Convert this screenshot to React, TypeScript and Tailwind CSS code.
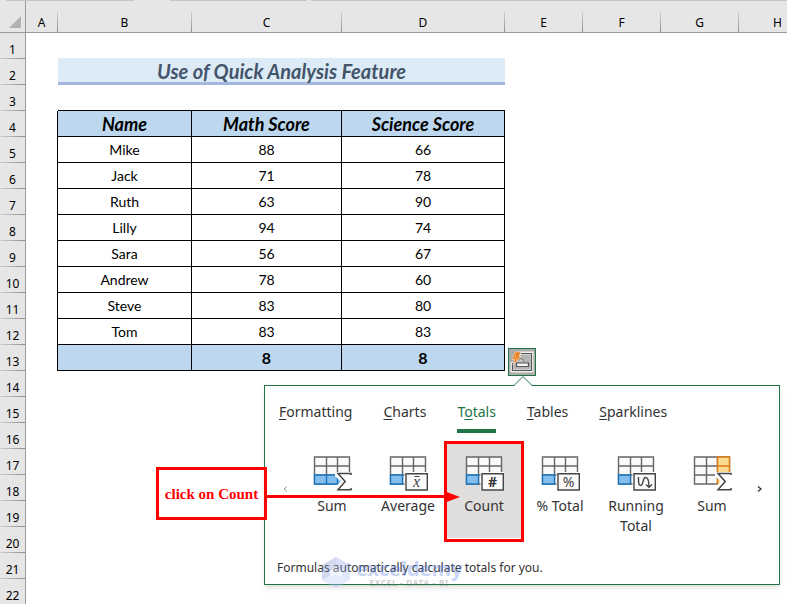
import React, { useState } from 'react';
import { clsx } from 'clsx';

interface Score {
  name: string;
  math: number;
  science: number;
}

type Badge = 'sigma' | 'mean' | 'hash' | 'percent' | 'running';

interface TotalOption {
  id: string;
  label: string;
  badge: Badge;
  column?: boolean;
}

const scores: Score[] = [
  { name: 'Mike', math: 88, science: 66 },
  { name: 'Jack', math: 71, science: 78 },
  { name: 'Ruth', math: 63, science: 90 },
  { name: 'Lilly', math: 94, science: 74 },
  { name: 'Sara', math: 56, science: 67 },
  { name: 'Andrew', math: 78, science: 60 },
  { name: 'Steve', math: 83, science: 80 },
  { name: 'Tom', math: 83, science: 83 },
];

const columns = ['A', 'B', 'C', 'D', 'E', 'F', 'G', 'H'];
const rows = Array.from({ length: 22 }, (_, i) => i + 1);
const tabs = ['Formatting', 'Charts', 'Totals', 'Tables', 'Sparklines'];

const totals: TotalOption[] = [
  { id: 'sum-row', label: 'Sum', badge: 'sigma' },
  { id: 'average', label: 'Average', badge: 'mean' },
  { id: 'count', label: 'Count', badge: 'hash' },
  { id: 'percent', label: '% Total', badge: 'percent' },
  { id: 'running', label: 'Running Total', badge: 'running' },
  { id: 'sum-column', label: 'Sum', badge: 'sigma', column: true },
];

const TotalIcon = ({ badge, column }: { badge: Badge; column?: boolean }) => (
  <svg width="40" height="35" viewBox="0 0 40 35" fill="none" aria-hidden="true">
    <path d="M2.5 1H37.5V28H2.5Z" fill="#fafafa" />
    <path d="M2.5 1H37.5V28H2.5ZM2.5 10H37.5M2.5 19H37.5M14.5 1V28M25.5 1V28" stroke="#666" strokeWidth="1.4" />
    {column && (
      <path d="M25.5 1H37.5V28H25.5ZM25.5 10H37.5M25.5 19H37.5" fill="#fadb8f" stroke="#dd7a14" strokeWidth="1.4" />
    )}
    {!column && badge === 'sigma' && (
      <path d="M2.5 19H37.5V28H2.5ZM14.5 19V28M25.5 19V28" fill="#83beec" stroke="#1c75bc" strokeWidth="1.4" />
    )}
    {!column && badge !== 'sigma' && (
      <path d="M2.5 19H14.5V28H2.5Z" fill="#83beec" stroke="#1c75bc" strokeWidth="1.4" />
    )}
    {badge === 'sigma' ? (
      <>
        <path d="M23 16H40V35H23V31L29 25.5L23 20Z" fill="#fff" />
        <path d="M39 19V17.5H26L33.2 25.5L26 33.8H39V32" stroke="#444" strokeWidth="1.5" />
      </>
    ) : (
      <>
        <path d="M16.5 16H40V35H16.5Z" fill="#fff" />
        <path d="M18 17.7H39.3V34H18Z" fill="#fafafa" stroke="#444" strokeWidth="1.4" />
      </>
    )}
    {badge === 'mean' && (
      <>
        <path d="M26.5 20.5H31.5" stroke="#444" />
        <text x="28.5" y="31" textAnchor="middle" fill="#444" className="font-['Liberation_Serif',serif] text-base italic">
          x
        </text>
      </>
    )}
    {badge === 'hash' && (
      <text x="28.5" y="31" textAnchor="middle" fill="#333" className="font-['Noto_Sans',sans-serif] text-sm font-bold">
        #
      </text>
    )}
    {badge === 'percent' && (
      <text x="28.5" y="31" textAnchor="middle" fill="#444" className="font-['Noto_Sans',sans-serif] text-sm">
        %
      </text>
    )}
    {badge === 'running' && (
      <path
        d="M22.5 21V24C22.5 27.5 23.5 29.5 24.8 29.5C27.5 29.5 26.5 21.5 29.5 21.5C32.5 21.5 33 25 33 31M30 28.5L33 31.3L36 28.5"
        stroke="#444"
        strokeWidth="1.4"
      />
    )}
  </svg>
);

const Sheet = () => {
  const header = 'border-r border-b border-black bg-[#bdd7ee] text-lg leading-5 font-bold italic';
  const cell = 'border-r border-b border-black text-sm leading-5 font-normal';
  const total = 'border-r border-b border-black bg-[#bdd7ee] text-base leading-5 font-bold';

  const renderCells = (row: number) => {
    if (row === 1) {
      return <td colSpan={3} className="border-b border-[#ddebf7]" />;
    }
    if (row === 2) {
      return (
        <td
          colSpan={3}
          className="border-b-3 border-[#a2b6de] bg-[#ddebf7] p-0 text-xl leading-5 font-bold text-[#44546a] italic"
        >
          Use of Quick Analysis Feature
        </td>
      );
    }
    if (row === 3) {
      return <td colSpan={3} className="border-b border-black" />;
    }
    if (row === 4) {
      return (
        <>
          <th className={header}>Name</th>
          <th className={header}>Math Score</th>
          <th className={header}>Science Score</th>
        </>
      );
    }
    if (row === 13) {
      return (
        <>
          <td className={total} />
          <td className={total}>8</td>
          <td className={total}>8</td>
        </>
      );
    }
    const score = scores[row - 5];
    if (!score) {
      return <td colSpan={3} />;
    }
    return (
      <>
        <td className={cell}>{score.name}</td>
        <td className={cell}>{score.math}</td>
        <td className={cell}>{score.science}</td>
      </>
    );
  };

  return (
    <table className="w-full table-fixed border-separate border-spacing-0 text-center font-['Lato',sans-serif] text-black">
      <colgroup>
        <col className="w-[26px]" />
        <col className="w-8" />
        <col className="w-[134px]" />
        <col className="w-[150px]" />
        <col className="w-[163px]" />
        <col className="w-[78px]" />
        <col className="w-[78px]" />
        <col className="w-[78px]" />
        <col className="w-[78px]" />
        <col />
      </colgroup>
      <thead>
        <tr className="h-8 bg-[#e6e6e6] font-['Noto_Sans',sans-serif] text-xs">
          <th className="border-r border-b border-[#9b9b9b] p-0 pr-1 pb-1 align-bottom">
            <svg width="12" height="12" className="ml-auto" aria-hidden="true">
              <path d="M12 0V12H0Z" fill="#b2b2b2" />
            </svg>
          </th>
          {columns.map((letter) => (
            <th key={letter} className="border-b border-[#9b9b9b] p-0 align-bottom font-normal">
              <div className="flex h-5 items-end justify-center border-r border-[#9b9b9b] leading-[18px] [border-image:linear-gradient(#d4d4d4,#8c8c8c)_1]">
                {letter}
              </div>
            </th>
          ))}
          <th className="border-b border-[#9b9b9b] p-0" />
        </tr>
      </thead>
      <tbody>
        {rows.map((row) => (
          <tr key={row} className="h-[26px]">
            <th className="border-r border-[#9b9b9b] bg-[#e6e6e6] p-0 align-bottom font-['Noto_Sans',sans-serif] text-xs font-normal">
              <div className="flex h-[26px] items-end justify-center border-b border-[#9b9b9b] leading-4 [border-image:linear-gradient(to_right,#cfcfcf,#8c8c8c)_1]">
                {row}
              </div>
            </th>
            <td className={clsx('p-0', row > 3 && row < 14 && 'border-r border-black')} />
            {renderCells(row)}
            <td colSpan={5} />
          </tr>
        ))}
      </tbody>
    </table>
  );
};

const QuickAnalysisButton = () => (
  <button
    type="button"
    aria-label="Quick Analysis"
    className="absolute top-[348px] left-[508px] flex size-7 items-center justify-center border border-[#217346] bg-[#ababab]"
  >
    <svg width="26" height="26" viewBox="0 0 26 26" fill="none" aria-hidden="true">
      <path d="M10 4H23V22H3V13" fill="#b4b4b4" stroke="#f0f0f0" strokeWidth="3" />
      <path d="M12 4.5H22.5V21.5H3.5V14" stroke="#555" strokeWidth="1.2" />
      <path d="M7.5 14H19.5V17.5H7.5Z" fill="#f5f5f5" stroke="#555" strokeWidth="1.2" />
      <path d="M10 10H14V14" fill="#ddd" stroke="#777" />
      <path d="M6 3H12L9.5 7.5H12L4 16L6 10.5H3Z" fill="#e87817" stroke="#f6e3d2" strokeWidth=".6" />
      <path d="M7.5 4.5L5.8 9H8.5L7 12" stroke="#ffb066" />
    </svg>
  </button>
);

const Watermark = () => (
  <div
    className="pointer-events-none absolute top-[171px] left-[57px] flex items-center gap-1.5 opacity-35"
    aria-hidden="true"
  >
    <svg width="28" height="31" viewBox="0 0 28 31">
      <path d="M14 0L28 8V23L14 31L0 23V8Z" fill="#a9bdf5" />
      <path d="M0 8L14 0V17L0 23Z" fill="#7f95d0" />
      <path d="M14 0L28 8V15L14 9Z" fill="#93a7ea" />
      <path d="M0 23L14 15L28 23L14 31Z" fill="#b9c8f7" />
      <path d="M8 14L14 10L20 14V20L14 17L8 20Z" fill="#dfe7ff" />
    </svg>
    <div className="text-center font-['Noto_Sans',sans-serif] font-bold">
      <div className="text-xl leading-5 text-[#6485ec]">exceldemy</div>
      <div className="text-[8px] leading-2 tracking-widest text-[#777]">EXCEL - DATA - BI</div>
    </div>
  </div>
);

const QuickAnalysisPanel = () => {
  const [activeTab, setActiveTab] = useState('Totals');
  const [selected, setSelected] = useState('count');

  return (
    <section className="absolute top-[385px] left-[264px] w-[516px] border border-[#217346] bg-white font-['Noto_Sans',sans-serif] text-[#333] shadow-md">
      <svg width="18" height="10" className="absolute -top-[10px] left-[249px]" aria-hidden="true">
        <path d="M0 10L9 1L18 10Z" fill="#fff" />
        <path d="M0 9.5L9 .5L18 9.5" fill="none" stroke="#217346" />
      </svg>
      <div role="tablist" className="flex gap-[31px] pt-4 pl-[14px] text-sm leading-5">
        {tabs.map((tab) => {
          const active = tab === activeTab;
          const keyIndex = tab === 'Totals' ? 1 : 0;
          return (
            <button
              key={tab}
              type="button"
              role="tab"
              aria-selected={active}
              onClick={() => setActiveTab(tab)}
              className={clsx('border-b-4 pb-[7px]', active ? 'border-[#217346] text-[#217346]' : 'border-transparent')}
            >
              {tab.slice(0, keyIndex)}
              <span className="underline underline-offset-2">{tab[keyIndex]}</span>
              {tab.slice(keyIndex + 1)}
            </button>
          );
        })}
      </div>
      <div className="flex items-start pt-[11px] text-sm leading-5">
        <button type="button" aria-label="Previous" className="mt-[41px] flex w-[29px] justify-end pr-1">
          <svg width="8" height="8" fill="none" stroke="#999" aria-hidden="true">
            <path d="M5 1.5L2 4L5 6.5" />
          </svg>
        </button>
        {totals.map((option) => (
          <button
            key={option.id}
            type="button"
            onClick={() => setSelected(option.id)}
            className={clsx(
              'flex h-[94px] w-19 flex-col items-center gap-[5px] pt-3',
              option.id === selected && 'bg-[#e0dedd]',
            )}
          >
            <TotalIcon badge={option.badge} column={option.column} />
            <span className="px-1">{option.label}</span>
          </button>
        ))}
        <button type="button" aria-label="Next" className="mt-[41px] flex flex-1 justify-center pr-3">
          <svg width="8" height="8" fill="none" stroke="#333" strokeWidth="1.3" aria-hidden="true">
            <path d="M3 1.5L6 4L3 6.5" />
          </svg>
        </button>
      </div>
      <p className="px-3 pt-[21px] pb-[7px] text-xs leading-[18px]">Formulas automatically calculate totals for you.</p>
      <Watermark />
    </section>
  );
};

const Callout = () => (
  <div className="pointer-events-none absolute top-[441px] left-[156px] flex">
    <div className="mt-[26px] flex h-[53px] w-[111px] items-center justify-center border-3 border-[#f00] font-['Liberation_Serif',serif] text-[15px] leading-5 font-bold whitespace-nowrap text-[#f00]">
      click on Count
    </div>
    <div className="w-[177px]" />
    <div className="h-[101px] w-20 border-3 border-[#f00]" />
    <svg width="193" height="12" className="absolute top-[50px] left-[111px]" aria-hidden="true">
      <path d="M0 4H177V0L193 6L177 12V7H0Z" fill="#f00" />
    </svg>
  </div>
);

export default function App() {
  return (
    <main className="relative min-h-screen overflow-hidden bg-white">
      <div className="flex h-px gap-1 bg-[#e6e6e6] pl-1.5">
        <div className="mr-8 w-32 bg-[#c6c6c6]" />
        <div className="w-[137px] bg-[#c6c6c6]" />
        <div className="flex-1 bg-[#c6c6c6]" />
      </div>
      <Sheet />
      <QuickAnalysisButton />
      <QuickAnalysisPanel />
      <Callout />
    </main>
  );
}
